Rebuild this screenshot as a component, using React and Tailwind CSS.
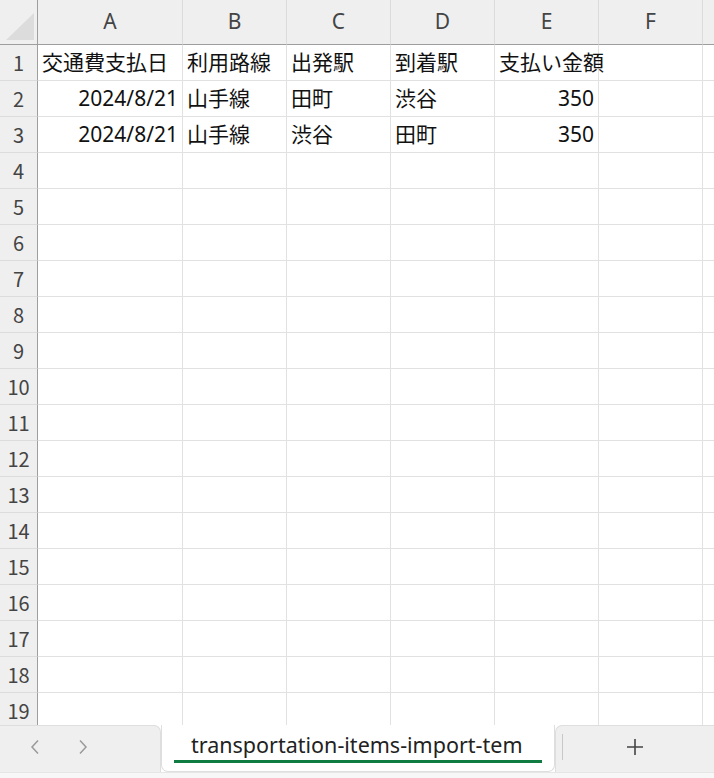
import React from 'react';

const COLS = [
  { key: 'A', w: 'w-[145px]' },
  { key: 'B', w: 'w-[104px]' },
  { key: 'C', w: 'w-[104px]' },
  { key: 'D', w: 'w-[104px]' },
  { key: 'E', w: 'w-[104px]' },
  { key: 'F', w: 'w-[104px]' },
];

// sheet contents, keyed by row number
const DATA = {
  1: [
    { v: '交通費支払日' },
    { v: '利用路線' },
    { v: '出発駅' },
    { v: '到着駅' },
    { v: '支払い金額' },
  ],
  2: [
    { v: '2024/8/21', right: true },
    { v: '山手線' },
    { v: '田町' },
    { v: '渋谷' },
    { v: '350', right: true },
  ],
  3: [
    { v: '2024/8/21', right: true },
    { v: '山手線' },
    { v: '渋谷' },
    { v: '田町' },
    { v: '350', right: true },
  ],
};

const ROWS = Array.from({ length: 19 }, (_, i) => i + 1);

const uiFont = "font-['Noto_Sans','Open_Sans',sans-serif]";
const cellFont = "font-['Noto_Sans','Noto_Sans_CJK_JP',sans-serif]";
const numFont = "font-['Noto_Sans_CJK_JP','Noto_Sans',sans-serif]";

const ColumnHeader = () => (
  <div className="flex h-[45px] shrink-0 bg-[#efefef]">
    <div className="relative w-[38px] shrink-0 border-r border-b border-[#9e9e9e]">
      {/* select-all corner */}
      <svg className="absolute left-[6px] top-[13px]" width="28" height="28" viewBox="0 0 28 28">
        <polygon points="28,0 28,27 0,27" fill="#dcdcdc" />
      </svg>
    </div>
    {COLS.map((c) => (
      <div
        key={c.key}
        className={`${c.w} shrink-0 border-r border-r-[#dcdcdc] border-b border-b-[#9e9e9e] flex items-center justify-center text-[21px] text-[#444] ${uiFont}`}
      >
        {c.key}
      </div>
    ))}
    <div className="flex-1 border-b border-[#9e9e9e]" />
  </div>
);

const Row = ({ n }) => {
  const cells = DATA[n] || [];
  return (
    <div className="flex h-[36px] shrink-0">
      <div
        className={`w-[38px] shrink-0 bg-[#efefef] border-r border-[#9e9e9e] border-b border-b-[#dcdcdc] flex items-center justify-center text-[20px] text-[#444] ${numFont}`}
      >
        {n}
      </div>
      {COLS.map((c, i) => {
        const cell = cells[i];
        return (
          <div
            key={c.key}
            className={`${c.w} shrink-0 border-r border-b border-[#e1e1e1] flex items-center px-[4px] whitespace-nowrap text-[21px] text-[#111] ${cellFont} ${
              cell && cell.right ? 'justify-end' : 'justify-start'
            }`}
          >
            {cell ? cell.v : ''}
          </div>
        );
      })}
      <div className="flex-1 border-b border-[#e1e1e1]" />
    </div>
  );
};

const Chevron = ({ dir }) => (
  <svg width="12" height="16" viewBox="0 0 12 16" fill="none">
    <path
      d={dir === 'left' ? 'M9 1.5 L3 8 L9 14.5' : 'M3 1.5 L9 8 L3 14.5'}
      stroke="#9a9a9a"
      strokeWidth="1.5"
    />
  </svg>
);

const SheetTabs = () => (
  <div className="flex flex-col shrink-0 h-[53px] bg-white">
    <div className="flex h-[47px]">
      <div className="w-[161px] shrink-0 bg-[#efefef] border-t border-r border-[#dedede] rounded-tr-[7px] flex items-center pl-[29px] gap-[36px] pb-[4px]">
        <Chevron dir="left" />
        <Chevron dir="right" />
      </div>
      <div className="w-[394px] shrink-0 bg-white rounded-b-[7px] border-b border-x border-[#dedede] relative">
        <div className={`absolute left-[29px] top-[4px] text-[21.5px] text-[#222] whitespace-nowrap ${uiFont}`}>
          transportation-items-import-tem
        </div>
        <div className="absolute left-[12px] right-[12px] top-[35px] h-[3px] bg-[#107c41]" />
      </div>
      <div className="flex-1 bg-[#efefef] border-t border-l border-[#dedede] rounded-tl-[7px] flex items-center pb-[4px]">
        <div className="w-px h-[26px] bg-[#c8c8c8] ml-[6px]" />
        <svg className="ml-[63px]" width="18" height="18" viewBox="0 0 18 18">
          <path d="M9 1 V17 M1 9 H17" stroke="#444" strokeWidth="1.6" />
        </svg>
      </div>
    </div>
    <div className="flex-1 bg-[#f7f7f7] border-t border-[#e6e6e6]" />
  </div>
);

export default function App() {
  return (
    <div className="w-[714px] h-[778px] flex flex-col bg-white overflow-hidden">
      <div className="h-[725px] flex flex-col overflow-hidden shrink-0">
        <ColumnHeader />
        {ROWS.map((n) => (
          <Row key={n} n={n} />
        ))}
      </div>
      <SheetTabs />
    </div>
  );
}
